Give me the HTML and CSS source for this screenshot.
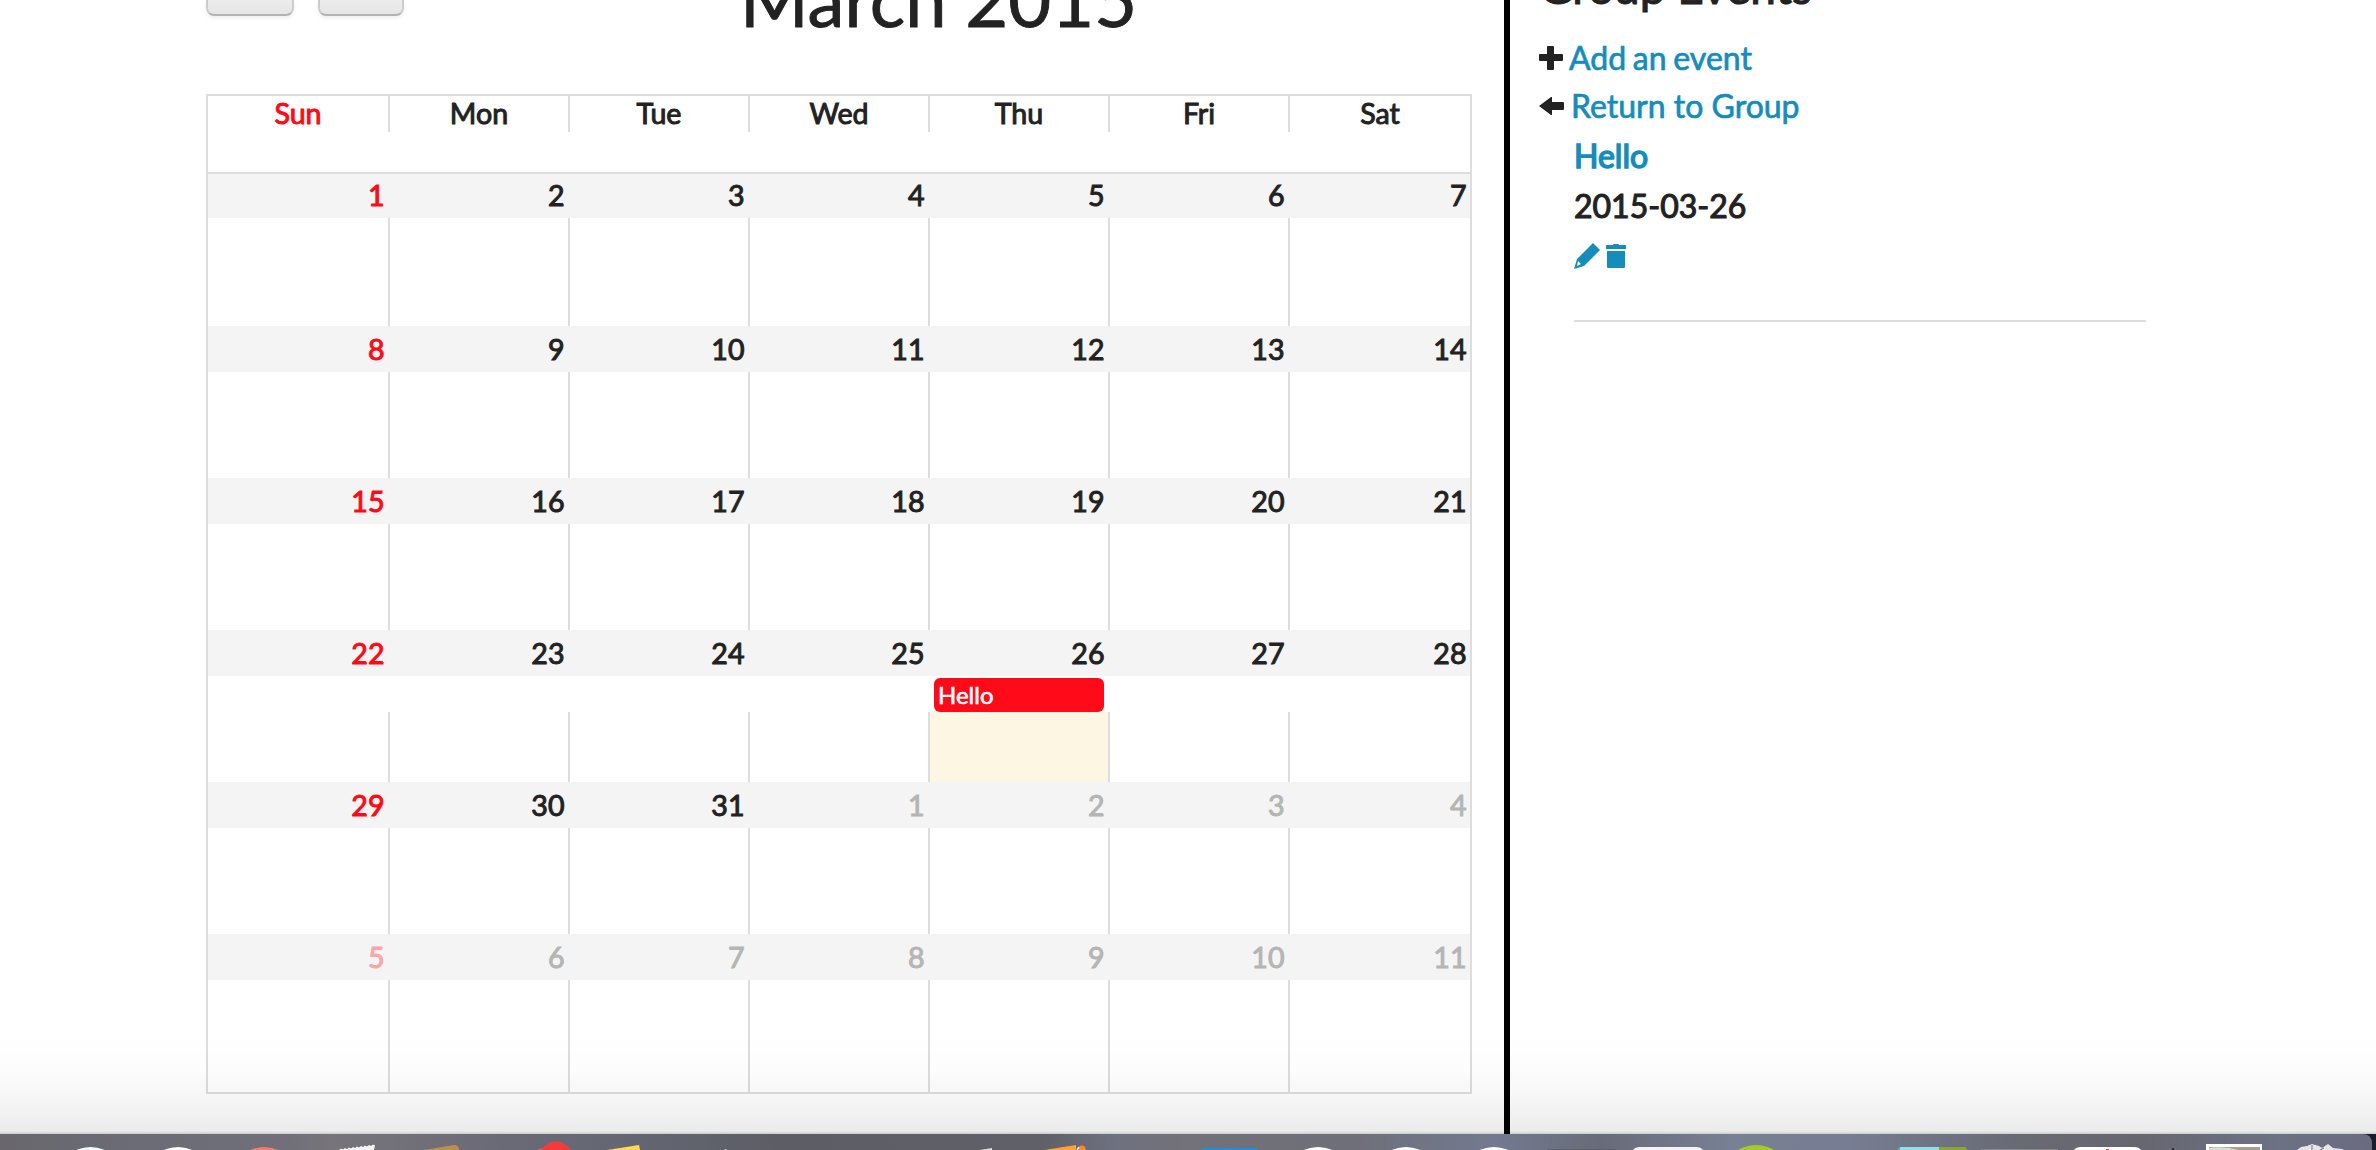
FILE: index.html
```html
<!DOCTYPE html>
<html lang="en"><head><meta charset="utf-8"><title>March 2015</title><link rel="stylesheet" href="styles.css"></head>
<body>
<div class="page">
<main class="main">
<header class="toolbar"><div class="btn"></div><div class="btn narrow"></div><h1 class="title">March 2015</h1></header>
<section class="calendar">
<div class="days"><span class="red">Sun</span><span>Mon</span><span>Tue</span><span>Wed</span><span>Thu</span><span>Fri</span><span>Sat</span></div>
<div class="week first"><div class="day red"><b>1</b></div><div class="day"><b>2</b></div><div class="day"><b>3</b></div><div class="day"><b>4</b></div><div class="day"><b>5</b></div><div class="day"><b>6</b></div><div class="day"><b>7</b></div></div>
<div class="week"><div class="day red"><b>8</b></div><div class="day"><b>9</b></div><div class="day"><b>10</b></div><div class="day"><b>11</b></div><div class="day"><b>12</b></div><div class="day"><b>13</b></div><div class="day"><b>14</b></div></div>
<div class="week"><div class="day red"><b>15</b></div><div class="day"><b>16</b></div><div class="day"><b>17</b></div><div class="day"><b>18</b></div><div class="day"><b>19</b></div><div class="day"><b>20</b></div><div class="day"><b>21</b></div></div>
<div class="week busy"><div class="day red"><b>22</b><i></i></div><div class="day"><b>23</b><i></i></div><div class="day"><b>24</b><i></i></div><div class="day"><b>25</b><i></i></div><div class="day today"><b>26</b><i><a class="event">Hello</a></i></div><div class="day"><b>27</b><i></i></div><div class="day"><b>28</b><i></i></div></div>
<div class="week"><div class="day red"><b>29</b></div><div class="day"><b>30</b></div><div class="day"><b>31</b></div><div class="day off"><b>1</b></div><div class="day off"><b>2</b></div><div class="day off"><b>3</b></div><div class="day off"><b>4</b></div></div>
<div class="week last"><div class="day red off"><b>5</b></div><div class="day off"><b>6</b></div><div class="day off"><b>7</b></div><div class="day off"><b>8</b></div><div class="day off"><b>9</b></div><div class="day off"><b>10</b></div><div class="day off"><b>11</b></div></div>
</section>
</main>
<aside class="side">
<h2 class="heading">Group Events</h2>
<p class="action"><svg width="24" height="24" viewBox="0 0 24 24"><path d="M9 0h5q1 0 1 1v7h8q1 0 1 1v5q0 1-1 1h-8v8q0 1-1 1H9q-1 0-1-1v-8H1q-1 0-1-1V9q0-1 1-1h7V1q0-1 1-1z" fill="#222"/></svg><a class="add">Add an event</a></p>
<p class="action"><svg width="25" height="18" viewBox="0 0 25 18"><path d="M0 9 12 0h1v5h11q1 0 1 1v6q0 1-1 1H13v5h-1z" fill="#222"/></svg><a class="return">Return to Group</a></p>
<div class="item"><a class="name">Hello</a><p class="date">2015-03-26</p>
<div class="icons"><svg width="26" height="26" viewBox="0 0 26 26"><path fill="#158cba" fill-rule="evenodd" d="M19 0 26 7 10 23 0 26 3 16zM4 18 3 23 7 21z"/></svg><svg width="20" height="25" viewBox="0 0 20 25"><path fill="#158cba" d="M7 2q0-1 1-1h4q1 0 1 1h6q1 0 1 1v3H0V3q0-1 1-1zM1 8h18v16q0 1-1 1H2q-1 0-1-1z"/></svg></div></div>
</aside>
</div>
<div class="shade"></div>
<svg class="dock" width="2376" height="16" viewBox="0 1134 2376 16">
<defs><linearGradient id="g"><stop offset="0" stop-color="#69676d"/><stop offset=".05" stop-color="#6a6b74"/><stop offset=".12" stop-color="#706f7a"/><stop offset=".14" stop-color="#77757a"/><stop offset=".2" stop-color="#6c6b77"/><stop offset=".26" stop-color="#646773"/><stop offset=".33" stop-color="#5c5d65"/><stop offset=".44" stop-color="#5f6068"/><stop offset=".47" stop-color="#6e717f"/><stop offset=".5" stop-color="#737179"/><stop offset=".57" stop-color="#6e6f79"/><stop offset=".63" stop-color="#737a90"/><stop offset=".675" stop-color="#686b78"/><stop offset=".73" stop-color="#788094"/><stop offset=".78" stop-color="#777d92"/><stop offset=".85" stop-color="#686a74"/><stop offset=".9" stop-color="#66666f"/><stop offset=".96" stop-color="#6c7183"/><stop offset="1" stop-color="#6a6b80"/></linearGradient></defs>
<path fill="#1b1c29" d="M2350 1134h26v16h-26z"/><path fill="url(#g)" d="M0 1134h2363q9 0 9 10v6H0z"/>
<g fill="#fff"><circle cx="90.500" cy="1181" r="34" fill="#f2fdff"/><circle cx="178" cy="1181" r="34"/><circle cx="1318" cy="1181" r="34"/><circle cx="1406" cy="1181" r="34"/><circle cx="1494" cy="1181" r="34"/></g>
<circle cx="264" cy="1181" r="34" fill="#f57c6b"/>
<path fill="#f5f5f5" d="M339 1150l2-1.500 2 1 2-1.500 2 1 2-1.500 2 1 2-1.500 2 1 2-1.500 2 1 2-1.500 2 1 2-1.500 2 1 2-1.500 2 1 2-1.500 2 1-1 4.500z"/>
<path fill="#bb904d" d="M424 1150l30-5q5 0 5 5z"/><path fill="#f05b45" d="M536 1150q4-2 12-2v2z"/><circle cx="556" cy="1158" r="16.500" fill="#f33c3a"/>
<path fill="#ffda51" d="M607 1150l32-5 1 5z"/><path fill="#ddd" d="M724 1150l2-1 1 1zM980 1150l12-2v2z"/><path fill="#ffa335" d="M1044 1150l32-5v5z"/><circle cx="1082" cy="1149" r="3.500" fill="#f68b24"/><path stroke="#eee" stroke-width="1.500" d="M1077 1150l2-3"/>
<path fill="#198fe5" d="M1203 1148h54v2h-54z"/><path fill="#4c515e" opacity=".5" d="M1547 1149h69v1h-69z"/><path fill="#f3f3f3" d="M1633 1150q2-3 7-3h56q5 0 7 3z"/><circle cx="1756" cy="1181" r="36" fill="#a3ca28"/>
<path fill="#45b7a7" d="M1897 1150q1-3 4-3h4v3z"/><path fill="#92dfec" d="M1900 1147h39v3h-39z"/><path fill="#8aa536" d="M1939 1147h26q2 1 2 3h-28z"/><path fill="#8b8785" d="M1981 1149h77v1h-77z"/><path fill="#fff" d="M2074 1150q2-3 7-3h53q5 0 7 3z"/><path fill="#f33" d="M2106 1149h3v1h-3z"/><path fill="#33343b" d="M2172 1148h2v2h-2z"/>
<path fill="#fff" d="M2206 1144h56v6h-56z"/><path fill="#a7a091" d="M2209 1147h51v3h-51z"/><path fill="#ddd" d="M2209 1150v-2q16-2 29 2z"/><path fill="#e6e6e6" d="M2297 1150l4-3 6-1 5-2 7 2 3 2 6-4 5 4 9 1 2 1z"/><path stroke="#777" d="M2312 1145v5M2324 1148l-4 2"/>
</svg>
</body></html>
```
FILE: styles.css
```css
* { box-sizing: border-box; }
body { margin: 0; width: 2376px; height: 1150px; overflow: hidden; background: #fff; color: #222; font-family: Lato, sans-serif; position: relative; }
h1, h2, p { margin: 0; font-weight: 400; }
.page { display: flex; height: 1134px; }
.main { width: 1510px; padding-left: 206px; border-right: 6px solid #000; }
.toolbar { display: flex; height: 94px; }
.btn { width: 88px; height: 16px; margin-right: 24px; border: 2px solid #ccc; border-top: 0; border-bottom-color: #b3b3b3; border-radius: 0 0 8px 8px; background: linear-gradient(#ececec, #e6e6e6); box-shadow: 0 2px 4px rgba(0,0,0,.07); }
.btn.narrow { width: 86px; }
.title { margin: -49px 0 0 312px; font-size: 74px; line-height: 96px; white-space: nowrap; -webkit-text-stroke: .9px; }
.calendar { width: 1266px; height: 1000px; border: 2px solid #ddd; font-size: 28.6px; font-weight: 400; -webkit-text-stroke: 1px; }
.days { display: grid; grid-template-columns: 182px repeat(6, 180px); height: 78px; border-bottom: 2px solid #ddd; }
.days span { height: 36px; line-height: 35px; text-align: center; border-right: 2px solid #ddd; }
.days span:last-child { border-right: 0; }
.week { display: grid; grid-template-columns: 182px repeat(6, 180px); height: 152px; }
.week.last { height: 158px; }
.day { display: flex; flex-direction: column; border-right: 2px solid #ddd; }
.day:last-child { border-right: 0; }
.day b { height: 46px; flex-shrink: 0; margin-right: -2px; padding-right: 5.5px; font-weight: 400; line-height: 47px; text-align: right; background: #f4f4f4; }
.day:last-child b { margin-right: 0; padding-right: 3.5px; }
.first .day b { height: 44px; line-height: 43px; }
.red { color: #ff0a18; }
.off b { color: #b5b5b5; }
.red.off b { color: #fca5a9; }
.day i { height: 36px; margin-right: -2px; padding: 2px 6px 0 4px; background: #fff; font-style: normal; }
.day:last-child i { margin-right: 0; }
.event { display: block; height: 34px; padding-left: 4px; border-radius: 6px; background: #ff0a18; color: #fff; font-size: 24px; line-height: 33px; -webkit-text-stroke: .6px; }
.today { background: #fdf6e3; }
.side { width: 636px; padding-left: 29px; font-size: 32px; -webkit-text-stroke: .7px; }
.heading { height: 75px; margin-top: -41px; font-size: 46px; line-height: 56px; -webkit-text-stroke: 1px; }
.action { display: flex; align-items: center; height: 48px; }
.action a { padding-bottom: 2px; }
.add { margin-left: 6px; word-spacing: -1.5px; }
.return { margin-left: 7px; }
.side a { color: #158cba; }
.item { margin: 1px 0 0 35px; width: 572px; height: 191px; border-bottom: 2px solid #ddd; -webkit-text-stroke: 1.1px; }
.name, .date { display: block; height: 50px; line-height: 50px; }
.name { -webkit-text-stroke: 1.5px; }
.icons { display: flex; gap: 6px; padding-top: 12px; }
.shade { position: absolute; left: 0; right: 0; top: 1034px; height: 100px; background: linear-gradient(transparent, rgba(0,0,0,.012) 35%, rgba(0,0,0,.035) 65%, rgba(0,0,0,.08) 97%, rgba(0,0,0,.2)); }
.dock { display: block; }
```
